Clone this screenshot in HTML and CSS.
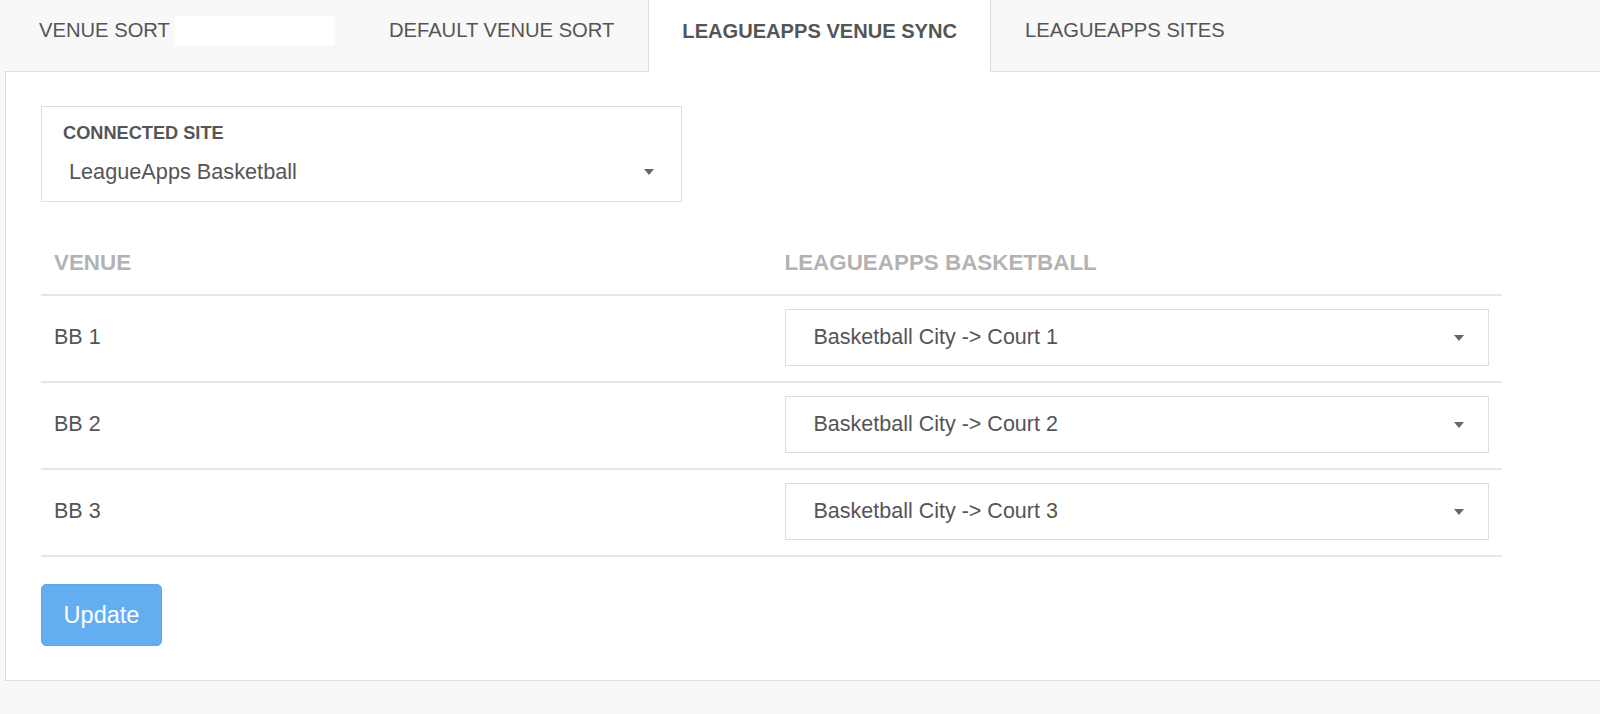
FILE: index.html
```html
<!DOCTYPE html>
<html>
<head>
<meta charset="utf-8">
<link rel="stylesheet" href="styles.css">
</head>
<body>
<div class="tabs">
  <div class="tab tab-first">VENUE SORT <span class="tab-input"></span></div>
  <div class="tab">DEFAULT VENUE SORT</div>
  <div class="tab tab-active">LEAGUEAPPS VENUE SYNC</div>
  <div class="tab">LEAGUEAPPS SITES</div>
</div>
<div class="panel">
  <div class="site-box">
    <div class="site-label">CONNECTED SITE</div>
    <div class="site-value"><span>LeagueApps Basketball</span><span class="caret"></span></div>
  </div>
  <table class="venues">
    <thead>
      <tr><th>VENUE</th><th>LEAGUEAPPS BASKETBALL</th></tr>
    </thead>
    <tbody>
      <tr><td>BB 1</td><td><div class="select"><span>Basketball City -&gt; Court 1</span><span class="caret"></span></div></td></tr>
      <tr><td>BB 2</td><td><div class="select"><span>Basketball City -&gt; Court 2</span><span class="caret"></span></div></td></tr>
      <tr><td>BB 3</td><td><div class="select"><span>Basketball City -&gt; Court 3</span><span class="caret"></span></div></td></tr>
    </tbody>
  </table>
  <button class="btn-update">Update</button>
</div>
</body>
</html>
```
FILE: styles.css
```css
html, body {
  margin: 0;
  padding: 0;
  background: #f8f8f8;
  font-family: "Liberation Sans", Arial, sans-serif;
  color: #555;
}

.tabs {
  display: flex;
  height: 71px;
  align-items: stretch;
}

.tab {
  display: flex;
  align-items: center;
  padding: 0 34px 10px 34px;
  font-size: 20.2px;
  color: #555;
  box-sizing: border-box;
}

.tab-first {
  padding-left: 39px;
  padding-right: 20px;
}

.tab-input {
  display: inline-block;
  width: 160px;
  height: 29px;
  background: #fff;
  margin-left: 5px;
}

.tab-active {
  background: #fff;
  font-weight: bold;
  border-left: 1px solid #dcdcdc;
  border-right: 1px solid #dcdcdc;
  height: 72px;
  position: relative;
  z-index: 1;
  padding-left: 33px;
  padding-right: 33px;
  font-size: 20.1px;
}

.panel {
  margin-left: 5px;
  background: #fff;
  border: 1px solid #dcdcdc;
  border-right: none;
  padding: 34px 35px 34px 35px;
}

.site-box {
  width: 641px;
  height: 96px;
  box-sizing: border-box;
  border: 1px solid #dedede;
  padding: 15px 27px 0 21px;
}

.site-label {
  font-size: 18.2px;
  font-weight: bold;
  color: #555;
  line-height: 22px;
}

.site-value {
  display: flex;
  align-items: center;
  justify-content: space-between;
  font-size: 21.7px;
  margin-top: 15px;
  padding-left: 6px;
  line-height: 26px;
}

.caret {
  width: 0;
  height: 0;
  border-left: 5px solid transparent;
  border-right: 5px solid transparent;
  border-top: 6px solid #666;
}

.venues {
  margin-top: 35px;
  width: 1461px;
  border-collapse: collapse;
  table-layout: fixed;
}

.venues th {
  text-align: left;
  font-size: 22.4px;
  font-weight: bold;
  color: #b3b3b3;
  padding: 13px 13px 18px 13px;
  border-bottom: 2px solid #e4e6e9;
  line-height: 26px;
}

.venues td {
  font-size: 21.5px;
  color: #555;
  padding: 13px 13px 15px 13px;
  border-bottom: 2px solid #e4e6e9;
  vertical-align: middle;
}

.select {
  height: 57px;
  box-sizing: border-box;
  border: 1px solid #dedede;
  display: flex;
  align-items: center;
  justify-content: space-between;
  padding: 0 24px 0 28px;
}

.btn-update {
  margin-top: 27px;
  display: block;
  height: 62px;
  width: 121px;
  border: 1px solid #5ea7ea;
  border-radius: 5px;
  background: #63adf1;
  color: #fff;
  font-family: "Liberation Sans", Arial, sans-serif;
  font-size: 23.5px;
  padding: 0;
}
```
